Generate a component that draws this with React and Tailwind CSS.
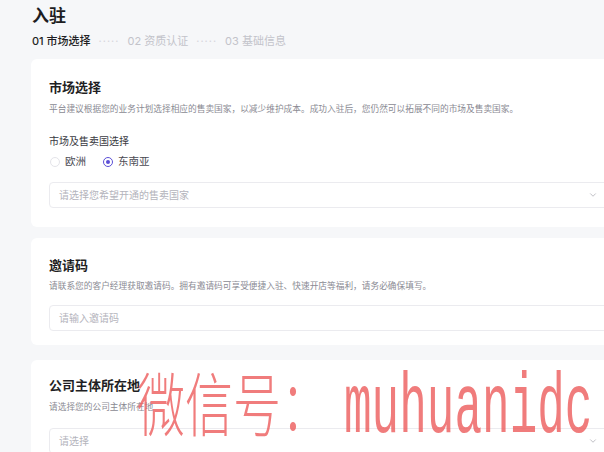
import { ChevronDown } from 'lucide-react';

const steps = [
  { no: '01', label: '市场选择', active: true },
  { no: '02', label: '资质认证', active: false },
  { no: '03', label: '基础信息', active: false },
];

function Card({ className = '', children }) {
  return <div className={`bg-white rounded-[6px] px-[18px] ${className}`}>{children}</div>;
}

function CardTitle({ children }) {
  return <h2 className="text-[13px] leading-[14px] font-bold text-[#1f1f24]">{children}</h2>;
}

function CardDesc({ className = '', children }) {
  return <p className={`text-[8.7px] leading-[12px] text-[#8a8a93] ${className}`}>{children}</p>;
}

function SelectBox({ placeholder, className = '' }) {
  return (
    <div className={`h-[26px] border border-[#ebebef] rounded-[4px] flex items-center justify-between pl-[9px] pr-[12px] ${className}`}>
      <span className="text-[10px] text-[#b4b4bc]">{placeholder}</span>
      <ChevronDown size={10} strokeWidth={1.5} className="text-[#9a9aa2]" />
    </div>
  );
}

function Radio({ checked, label }) {
  return (
    <label className="flex items-center gap-[5px]">
      <span
        className={`w-[10px] h-[10px] rounded-full border flex items-center justify-center ${
          checked ? 'border-[#5b4fd6]' : 'border-[#e4e4e9]'
        }`}
      >
        {checked && <span className="w-[4px] h-[4px] rounded-full bg-[#5b4fd6]" />}
      </span>
      <span className="text-[10.5px] text-[#4a4a52]">{label}</span>
    </label>
  );
}

export default function App() {
  return (
    <div className="relative w-[604px] h-[452px] overflow-hidden bg-[#f6f7f9] font-['Inter','Noto_Sans_CJK_SC',sans-serif]">
      <div className="w-[660px] pl-[31px] pr-[31px]">
        {/* header */}
        <div className="pt-[7px] pl-[1px]">
          <h1 className="text-[17px] leading-[19px] font-bold text-[#1d1d22]">入驻</h1>
          <div className="flex items-center mt-[9px] text-[11px] leading-[12px]">
            {steps.map((s, i) => (
              <div key={s.no} className="flex items-center">
                {i > 0 && <span className="mx-[8px] text-[#d6d6dc] tracking-[1px]">·····</span>}
                <span className={s.active ? 'text-[#1f1f24] font-medium' : 'text-[#c3c3ca]'}>
                  {s.no} {s.label}
                </span>
              </div>
            ))}
          </div>
        </div>

        {/* market selection */}
        <Card className="mt-[12px] pt-[21px] pb-[19px]">
          <CardTitle>市场选择</CardTitle>
          <CardDesc className="mt-[9px]">
            平台建议根据您的业务计划选择相应的售卖国家，以减少维护成本。成功入驻后，您仍然可以拓展不同的市场及售卖国家。
          </CardDesc>
          <div className="mt-[20px] text-[10px] leading-[12px] text-[#3a3a42]">市场及售卖国选择</div>
          <div className="mt-[8px] h-[14px] flex items-center gap-[17px] pl-[1px]">
            <Radio label="欧洲" />
            <Radio checked label="东南亚" />
          </div>
          <SelectBox className="mt-[13px]" placeholder="请选择您希望开通的售卖国家" />
        </Card>

        {/* invite code */}
        <Card className="mt-[11px] pt-[20px] pb-[14px]">
          <CardTitle>邀请码</CardTitle>
          <CardDesc className="mt-[8px]">
            请联系您的客户经理获取邀请码。拥有邀请码可享受便捷入驻、快速开店等福利，请务必确保填写。
          </CardDesc>
          <div className="mt-[13px] h-[26px] border border-[#ebebef] rounded-[4px] flex items-center pl-[9px]">
            <span className="text-[10px] text-[#b4b4bc]">请输入邀请码</span>
          </div>
        </Card>

        {/* company location */}
        <Card className="mt-[15px] pt-[18px] pb-[20px]">
          <CardTitle>公司主体所在地</CardTitle>
          <CardDesc className="mt-[9px]">请选择您的公司主体所在地</CardDesc>
          <SelectBox className="mt-[15px]" placeholder="请选择" />
        </Card>
      </div>

      {/* watermark */}
      <span className="absolute left-[137px] top-[366px] whitespace-nowrap text-[48px] leading-[48px] text-[#ec5b5b]/80 font-['Noto_Sans_CJK_SC',serif] font-light scale-y-[1.45] origin-top pointer-events-none">
        微信号：
      </span>
      <span className="absolute left-[344px] top-[367px] whitespace-nowrap text-[46px] leading-[46px] text-[#ec5b5b]/80 font-['Liberation_Mono',monospace] scale-y-[1.85] origin-top pointer-events-none">
        muhuanidc
      </span>
    </div>
  );
}
